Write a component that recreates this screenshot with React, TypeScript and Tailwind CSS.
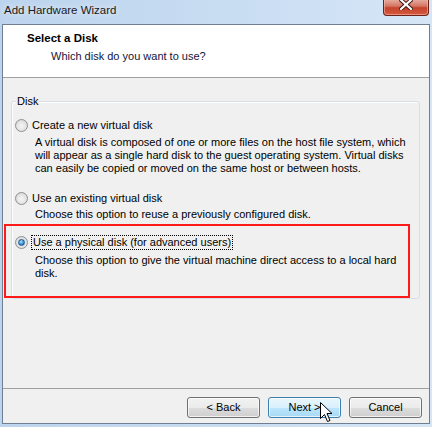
import React from "react";

const ui = "font-['Segoe_UI','Liberation_Sans',sans-serif] text-[11px]";

function Radio({ checked }: { checked?: boolean }) {
	return (
		<span className="flex h-[13px] w-[13px] shrink-0 items-center justify-center rounded-full border border-[#8e8f8f] bg-[radial-gradient(circle_at_50%_55%,#f6f6f6_0%,#e3e3e3_55%,#cdcdcd_100%)]">
			{checked && (
				<span className="h-[7px] w-[7px] rounded-full border border-[#1b5a92] bg-[radial-gradient(circle_at_40%_35%,#a8e0ff_0%,#3c93d6_55%,#124f88_100%)]" />
			)}
		</span>
	);
}

function WinButton({ label, hot }: { label: string; hot?: boolean }) {
	return (
		<button
			className={
				hot
					? "h-[21px] w-[73px] rounded-[3px] border border-[#3c7fb1] bg-[linear-gradient(#eaf6fd_0%,#d9f0fc_50%,#bee6fd_50%,#a7d9f5_100%)] leading-[19px] text-black shadow-[inset_0_0_0_1px_rgba(255,255,255,0.7)]"
					: "h-[21px] w-[73px] rounded-[3px] border border-[#707070] bg-[linear-gradient(#f2f2f2_0%,#ebebeb_50%,#dddddd_50%,#cfcfcf_100%)] leading-[19px] text-black shadow-[inset_0_0_0_1px_rgba(255,255,255,0.7)]"
			}
		>
			{label}
		</button>
	);
}

export default function App() {
	return (
		<div
			className={`relative flex h-[427px] w-[432px] flex-col overflow-hidden bg-[linear-gradient(90deg,#bcd4ee_0%,#c9ddf2_55%,#d6e6f7_100%)] ${ui}`}
		>
			{/* title bar */}
			<div className="flex h-[24px] shrink-0 items-start justify-between">
				<div className="pl-[4px] pt-[2px] text-[11.5px] leading-[16px] text-[#1a1a1a] [text-shadow:0_0_6px_rgba(255,255,255,0.9)]">
					Add Hardware Wizard
				</div>
				<div className="mr-[3px] -mt-[1px] flex h-[17px] w-[46px] items-start justify-center rounded-b-[4px] border border-t-0 border-[#6b2219] bg-[linear-gradient(#e8b2a6_0%,#d47462_45%,#c4432c_55%,#d65b3f_100%)] shadow-[inset_0_0_0_1px_rgba(255,200,190,0.5)]">
					<svg width="14" height="11" viewBox="0 0 14 11">
						<path d="M2 1 L12 10 M12 1 L2 10" stroke="#3b1410" strokeWidth="4" strokeLinecap="square" />
						<path d="M2 1 L12 10 M12 1 L2 10" stroke="#ffffff" strokeWidth="2.2" strokeLinecap="square" />
					</svg>
				</div>
			</div>

			{/* client area */}
			<div className="mx-[2px] mb-[3px] flex flex-1 flex-col border border-[#707f8f] bg-[#f0f0f0]">
				<div className="h-[53px] shrink-0 border-b border-[#a0a0a0] bg-white pt-[5px]">
					<div className="pl-[24px] text-[11.5px] font-bold leading-[16px] text-black">Select a Disk</div>
					<div className="mt-[2px] pl-[48px] leading-[16px] text-[#14143c]">
						Which disk do you want to use?
					</div>
				</div>

				<div className="flex flex-1 flex-col">
					<div className="relative ml-[8px] mr-[9px] mt-[23px] h-[198px] rounded-[3px] border border-[#d5dfe5] shadow-[inset_1px_1px_0_#ffffff] pt-[16px] pl-[3px]">
						<span className="absolute -top-[9px] left-[4px] bg-[#f0f0f0] px-[1px] leading-[16px] text-black">
							Disk
						</span>

						<div className="flex h-[15px] items-center gap-[3px] leading-[15px] text-black">
							<Radio />
							<span className="px-[1px]">Create a new virtual disk</span>
						</div>
						<div className="mt-[3px] pl-[20px] leading-[13px] text-black whitespace-nowrap">
							<div>A virtual disk is composed of one or more files on the host file system, which</div>
							<div>will appear as a single hard disk to the guest operating system. Virtual disks</div>
							<div>can easily be copied or moved on the same host or between hosts.</div>
						</div>

						<div className="mt-[16px] flex h-[15px] items-center gap-[3px] leading-[15px] text-black">
							<Radio />
							<span className="px-[1px]">Use an existing virtual disk</span>
						</div>
						<div className="mt-[2px] pl-[20px] leading-[13px] text-black whitespace-nowrap">
							Choose this option to reuse a previously configured disk.
						</div>

						<div className="mt-[14px] flex h-[15px] items-center gap-[3px] leading-[13px] text-black">
							<Radio checked />
							<span className="border border-dotted border-black px-[1px]">
								Use a physical disk (for advanced users)
							</span>
						</div>
						<div className="mt-[4px] pl-[20px] leading-[13px] text-black whitespace-nowrap">
							<div>Choose this option to give the virtual machine direct access to a local hard</div>
							<div>disk.</div>
						</div>
					</div>
				</div>

				<div className="flex h-[35px] shrink-0 items-start justify-end gap-[8px] border-t border-[#a0a0a0] pr-[7px] pt-[8px]">
					<WinButton label="< Back" />
					<WinButton label="Next >" hot />
					<WinButton label="Cancel" />
				</div>
			</div>

			{/* annotation box */}
			<div className="pointer-events-none absolute left-[4px] top-[224px] h-[74px] w-[406px] border-2 border-[#ff1a1a]" />

			{/* mouse pointer */}
			<svg className="pointer-events-none absolute left-[320px] top-[402px]" width="13" height="21" viewBox="0 0 13 21">
				<path
					d="M0.5 0.5 L0.5 16.5 L4.5 12.5 L7.5 19.5 L10 18.5 L7 11.5 L12 11.5 Z"
					fill="#ffffff"
					stroke="#000000"
					strokeWidth="1"
					strokeLinejoin="miter"
				/>
			</svg>
		</div>
	);
}
